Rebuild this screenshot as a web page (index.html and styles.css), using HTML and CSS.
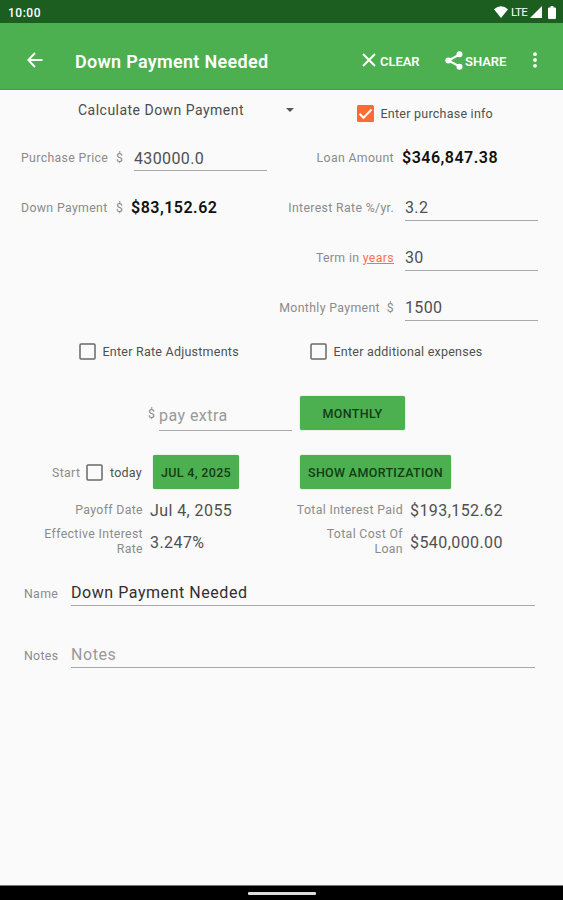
FILE: index.html
```html
<!DOCTYPE html>
<html lang="en">
<head>
<meta charset="utf-8">
<title>Down Payment Needed</title>
<link rel="stylesheet" href="styles.css">
</head>
<body>
<div class="screen">
  <header class="status">
    <span class="clock">10:00</span>
    <svg class="wifi" width="14" height="12" viewBox="0 0 14 12"><path d="M0 3.2Q7-2.6 14 3.2L7 12Z"/></svg>
    <span class="lte">LTE</span>
    <svg class="signal" width="12" height="12" viewBox="0 0 12 12"><path d="M12 0V12H0Z"/></svg>
    <svg class="battery" width="8" height="13" viewBox="0 0 8 13"><path d="M2.500 0h3v1.500H7q1 0 1 1V12q0 1-1 1H1q-1 0-1-1V2.500q0-1 1-1h1.500z"/></svg>
  </header>
  <nav class="appbar">
    <svg class="back" width="16" height="16" viewBox="0 0 16 16"><path d="M15.500 8H1.500M8 1L1.300 8L8 15"/></svg>
    <h1>Down Payment Needed</h1>
    <svg class="close" width="14" height="14" viewBox="0 0 14 14"><path d="M1 1L13 13M13 1L1 13"/></svg>
    <span class="action clear">CLEAR</span>
    <svg class="share" width="18" height="19" viewBox="0 0 18 19"><path d="M14.500 3.500L3.500 9.500L14.500 15.500"/><circle cx="14.500" cy="3.300" r="3"/><circle cx="3.300" cy="9.500" r="3"/><circle cx="14.500" cy="15.700" r="3"/></svg>
    <span class="action share-text">SHARE</span>
    <svg class="more" width="4" height="16" viewBox="0 0 4 16"><circle cx="2" cy="2.200" r="1.900"/><circle cx="2" cy="8" r="1.900"/><circle cx="2" cy="13.800" r="1.900"/></svg>
  </nav>
  <main>
    <div class="row mode">
      <span class="spinner">Calculate Down Payment</span>
      <svg class="caret" width="8" height="4" viewBox="0 0 8 4"><path d="M0 0H8L4 4Z"/></svg>
      <label class="check purchase"><svg width="17" height="17" viewBox="0 0 17 17"><rect class="on" width="17" height="17" rx="1.500"/><path class="tick" d="M2.500 8.800L6.500 12.800L14.500 4.500"/></svg><span>Enter purchase info</span></label>
    </div>
    <div class="row pair">
      <span class="label left l-price">Purchase Price</span><span class="label cur">$</span><span class="field price">430000.0</span>
      <span class="label right l-loan">Loan Amount</span><b class="amount loan">$346,847.38</b>
    </div>
    <div class="row pair">
      <span class="label left l-down">Down Payment</span><span class="label cur">$</span><b class="amount down">$83,152.62</b>
      <span class="label right l-rate">Interest Rate %/yr.</span><span class="field">3.2</span>
    </div>
    <div class="row single">
      <span class="label right l-term">Term in <u>years</u></span><span class="field">30</span>
    </div>
    <div class="row single">
      <span class="label right l-month">Monthly Payment &nbsp;$</span><span class="field">1500</span>
    </div>
    <div class="row options">
      <label class="check adjust"><svg width="17" height="17" viewBox="0 0 17 17"><rect class="off" x="1" y="1" width="15" height="15" rx="1"/></svg><span>Enter Rate Adjustments</span></label>
      <label class="check expenses"><svg width="17" height="17" viewBox="0 0 17 17"><rect class="off" x="1" y="1" width="15" height="15" rx="1"/></svg><span>Enter additional expenses</span></label>
    </div>
    <div class="row extra">
      <span class="label extra-cur">$</span><span class="field hint">pay extra</span>
      <button class="btn monthly">MONTHLY</button>
    </div>
    <div class="row start">
      <span class="label l-start">Start</span>
      <label class="check today"><svg width="17" height="17" viewBox="0 0 17 17"><rect class="off" x="1" y="1" width="15" height="15" rx="1"/></svg><span>today</span></label>
      <button class="btn date">JUL 4, 2025</button>
      <button class="btn amort">SHOW AMORTIZATION</button>
    </div>
    <div class="row result">
      <span class="label right l-payoff">Payoff Date</span><span class="value">Jul 4, 2055</span>
      <span class="label right l-interest">Total Interest Paid</span><span class="value">$193,152.62</span>
    </div>
    <div class="row result tall">
      <span class="label right l-eff">Effective Interest<br>Rate</span><span class="value">3.247%</span>
      <span class="label right l-cost">Total Cost Of<br>Loan</span><span class="value">$540,000.00</span>
    </div>
    <div class="row text name">
      <span class="label l-name">Name</span><span class="field wide">Down Payment Needed</span>
    </div>
    <div class="row text notes">
      <span class="label l-notes">Notes</span><span class="field wide hint">Notes</span>
    </div>
  </main>
  <footer><span class="handle"></span></footer>
</div>
</body>
</html>
```
FILE: styles.css
```css
* { box-sizing: border-box; }
body { margin: 0; background: #fafafa; font-family: Roboto, sans-serif; color: #4c4c4c; }
.screen { width: 563px; height: 900px; display: flex; flex-direction: column; overflow: hidden; }
svg { flex: none; display: block; }
span, b, label { white-space: nowrap; }

.status { height: 23px; flex: none; background: #1b5e20; color: #fff; display: flex; align-items: center; padding: 1px 7px 0 8px; }
.status svg { fill: #fff; }
.clock { font-size: 12px; letter-spacing: .5px; font-weight: 500; margin-right: auto; padding-top: 1px; }
.lte { font-size: 11.500px; margin: 0 2px 0 3px; width: 17px; letter-spacing: -.6px; }
.battery { margin-left: 6px; }

.appbar { height: 67px; flex: none; background: #4caf50; border-bottom: 1px solid #38a33c; color: #fff; display: flex; align-items: center; padding: 8px 26px 0 27px; }
.appbar path { fill: none; stroke: #fff; stroke-width: 2; }
.appbar circle { fill: #fff; }
.appbar h1 { margin: 2px 0 0 32px; width: 287px; font-size: 18px; font-weight: 600; letter-spacing: .3px; white-space: nowrap; }
.action { font-size: 13px; font-weight: 600; letter-spacing: -.05px; padding-top: 2px; }
.clear { margin-left: 4px; width: 65px; }
.share-text { margin-left: 2px; width: 66px; }
.more { margin-left: auto; }

main { flex: 1; display: flex; flex-direction: column; }
.row { display: flex; align-items: center; height: 50px; flex: none; font-size: 16px; }
.label { font-size: 12.300px; color: #8b8b8b; letter-spacing: .35px; flex: none; padding-top: 1px; }
.label u { color: #ff7051; }
.right { text-align: right; }
.field { flex: none; width: 133px; height: 28px; line-height: 29px; border-bottom: 1px solid #a8a8a8; letter-spacing: .38px; color: #505050; }
.single .field { line-height: 30px; }
.hint { color: #999; }
.value { letter-spacing: .42px; color: #505050; }
.amount { font-weight: 600; color: #111; letter-spacing: .5px; padding-top: 1px; }
.check { display: flex; align-items: center; gap: 7px; font-size: 12.500px; letter-spacing: .24px; color: #505050; }
.on { fill: #ff6b35; }
.tick { fill: none; stroke: #fff; stroke-width: 2; }
.off { fill: none; stroke: #686868; stroke-width: 1.500; }
.btn { height: 34px; border: 0; border-radius: 2px; background: #4caf50; color: #123d15; font: 500 12.500px Roboto, sans-serif; letter-spacing: .33px; padding: 0; white-space: nowrap; box-shadow: 0 0 1px #4caf50; }

.mode { height: 42px; padding-left: 78px; }
.spinner { width: 208px; font-size: 14px; letter-spacing: .48px; padding-bottom: 3px; }
.caret { fill: #555; margin-bottom: 3px; }
.purchase { margin: 4px 0 0 63px; }
.purchase, .adjust, .expenses { gap: 6.500px; }
.pair { padding-left: 21px; }
.pair .left { width: 95px; }
.cur { width: 18px; }
.l-loan { width: 127px; }
.loan { margin-left: 8px; }
.down { width: 144px; margin-left: -3px; }
.l-rate { width: 119px; }
.pair .right + .field { margin-left: 11px; }
.pair .price { height: 27px; }
.single .right { width: 394px; }
.single .field { margin-left: 11px; }
.options { height: 40px; padding: 0 0 2px 79px; }
.adjust { width: 231px; }
.extra { height: 62px; padding: 20px 0 0 148px; align-items: flex-start; margin-top: 4px; }
.extra-cur { width: 11px; padding-top: 11px; }
.extra .field { height: 35px; line-height: 39px; letter-spacing: .45px; }
.btn.monthly { width: 105px; margin-left: 8px; }
.start { padding: 15px 0 0 52px; height: 61px; margin-top: -4px; }
.l-start { width: 34px; }
.today { width: 67px; }
.date { width: 86px; }
.amort { width: 151px; margin-left: 61px; }
.result { height: 26px; margin-top: 2px; }
.result .right { width: 143px; margin-right: 7px; padding-top: 0; }
.result .value { width: 130px; }
.result .right + .value + .right { width: 123px; }
.tall { height: 34px; margin-top: 2px; }
.tall .label { line-height: 15px; }
.text { padding-left: 24px; height: 60px; }
.text .label { width: 47px; padding-top: 4px; }
.text .wide { width: 464px; line-height: 30px; letter-spacing: .55px; }
.name { margin-top: 3px; }
.name .wide { color: #303030; }
.notes { margin-top: 2px; }
footer { height: 15px; flex: none; background: #000; border-top: 1px solid #777; display: flex; justify-content: center; padding-top: 6px; }
.handle { width: 68px; height: 3px; background: #ddd; border-radius: 1px; }
```
